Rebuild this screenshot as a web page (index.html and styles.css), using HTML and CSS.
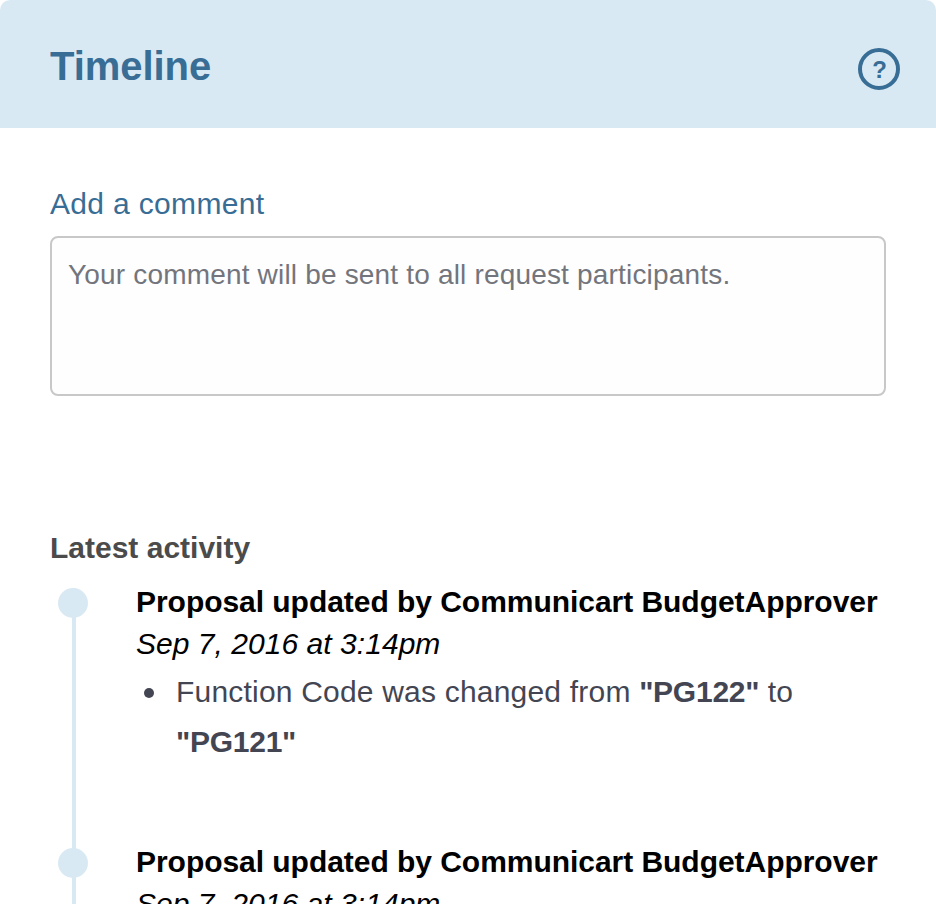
FILE: index.html
```html
<!DOCTYPE html>
<html lang="en">
<head>
<meta charset="utf-8">
<title>Timeline</title>
<link rel="stylesheet" href="styles.css">
</head>
<body>
<section class="card">
  <header class="card-header">
    <h2 class="title">Timeline</h2>
    <svg class="help" viewBox="0 0 42 42" role="img" aria-label="Help"><circle cx="21" cy="21" r="19" fill="none" stroke="#386d95" stroke-width="4"/><text x="21.7" y="30" text-anchor="middle">?</text></svg>
  </header>
  <div class="comment">
    <label class="label" for="comment">Add a comment</label>
    <textarea id="comment" class="input" placeholder="Your comment will be sent to all request participants."></textarea>
  </div>
  <h3 class="subtitle">Latest activity</h3>
  <ol class="timeline">
    <li class="event">
      <span class="dot"></span>
      <div class="event-body">
        <strong class="event-title">Proposal updated by Communicart BudgetApprover</strong>
        <em class="date">Sep 7, 2016 at 3:14pm</em>
        <ul class="changes"><li>Function Code was changed from <b>"PG122"</b> to<br><b>"PG121"</b></li></ul>
      </div>
    </li>
    <li class="event">
      <span class="dot"></span>
      <div class="event-body">
        <strong class="event-title">Proposal updated by Communicart BudgetApprover</strong>
        <em class="date">Sep 7, 2016 at 3:14pm</em>
      </div>
    </li>
  </ol>
</section>
</body>
</html>
```
FILE: styles.css
```css
* { box-sizing: border-box; }
html, body { margin: 0; background: #fff; }
body {
  height: 904px;
  overflow: hidden;
  font-family: "Liberation Sans", Arial, sans-serif;
  color: #000;
}
.card { height: 904px; overflow: hidden; }
.card-header {
  display: flex;
  justify-content: space-between;
  height: 128px;
  padding: 48px 36px 0 50px;
  background: #d9e9f3;
  border-radius: 10px 10px 0 0;
}
.title {
  margin: -5px 0 0;
  color: #386d95;
  font-size: 40px;
  line-height: 46px;
  letter-spacing: -0.05px;
}
.help { width: 42px; height: 42px; }
.help text { fill: #386d95; font-size: 24px; font-weight: 700; }
.comment { padding: 58px 50px 0; }
.label {
  display: block;
  height: 50px;
  color: #386d95;
  font-size: 30px;
  line-height: 36px;
  letter-spacing: 0.33px;
}
.input {
  display: block;
  width: 836px;
  height: 160px;
  padding: 21px 16px 19px;
  border: 2px solid #c8c8c8;
  border-radius: 8px;
  background: #fefefe;
  font-family: inherit;
  font-size: 28px;
  line-height: 32px;
  letter-spacing: 0.18px;
  resize: none;
}
.input::placeholder { color: #73757d; opacity: 1; }
.subtitle {
  margin: 134px 0 0 50px;
  color: #4b4b4b;
  font-size: 30px;
  line-height: 36px;
}
.timeline { margin: 22px 0 0; padding: 0 0 0 58px; list-style: none; }
.event {
  display: flex;
  gap: 48px;
  height: 260px;
  background: linear-gradient(#d9e9f3, #d9e9f3) 14px 0 / 4px 100% no-repeat;
}
.dot { flex: none; width: 30px; height: 30px; border-radius: 50%; background: #d9e9f3; }
.event-body { white-space: nowrap; }
.event-title, .date { display: block; font-size: 30px; line-height: 42px; }
.event-title { margin-top: -7px; letter-spacing: -0.04px; }
.date { letter-spacing: 0.04px; }
.changes {
  margin: 2px 0 0;
  padding: 0;
  list-style: none;
  color: #434652;
  font-size: 30px;
  line-height: 50px;
  letter-spacing: 0.2px;
}
.changes li { display: flow-root; padding-left: 40px; }
.changes li::before {
  content: "";
  float: left;
  width: 10px;
  height: 10px;
  margin: 21px 0 0 -32px;
  border-radius: 50%;
  background: #434652;
}
.changes b { letter-spacing: -0.25px; }
```
